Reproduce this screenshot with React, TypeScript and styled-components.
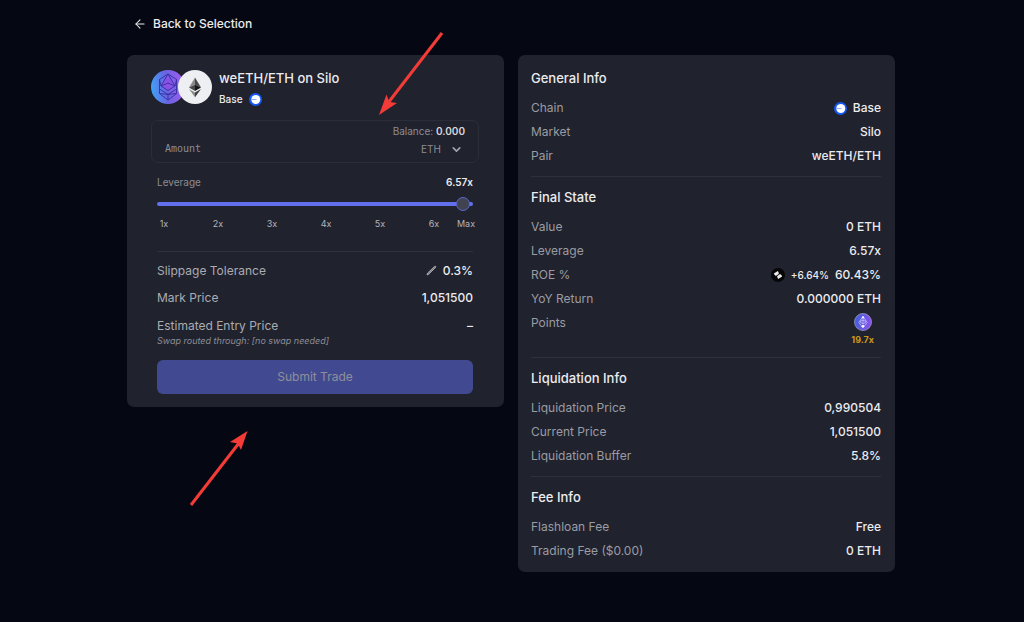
import React, { useState } from "react";
import styled, { createGlobalStyle } from "styled-components";
import { ArrowLeft, ChevronDown } from "lucide-react";

const sans = `Inter, "Liberation Sans", sans-serif`;

const GlobalStyle = createGlobalStyle`
  * { box-sizing: border-box; }
  body {
    margin: 0;
    background: #050812;
    color: #ececee;
    font-family: ${sans};
    font-size: 12px;
    line-height: 16px;
  }
`;

const Page = styled.main`
  min-height: 100vh;
  padding: 12px 18px 24px 16px;
`;

const Content = styled.div`
  max-width: 768px;
  margin: 0 auto;
`;

const BackLink = styled.a`
  display: inline-flex;
  align-items: center;
  gap: 6px;
  height: 24px;
  margin: 0 0 19px 6px;
  color: #ececee;
  font-weight: 500;
  text-decoration: none;
`;

const Columns = styled.div`
  display: grid;
  grid-template-columns: 1fr 1fr;
  align-items: start;
  gap: 14px;
  @media (max-width: 680px) {
    grid-template-columns: 1fr;
  }
`;

const Panel = styled.section<{ $pad: string }>`
  position: relative;
  padding: ${(p) => p.$pad};
  background: #20222e;
  border-radius: 7px;
`;

const TradeHeader = styled.header`
  display: flex;
  gap: 7px;
  margin-bottom: 11px;
`;

const TokenPair = styled.div`
  display: flex;
  padding-top: 2px;
  svg + svg { margin-left: -7px; }
`;

const PairName = styled.h1`
  margin: 0;
  font-size: 13px;
  line-height: 21px;
  font-weight: 500;
`;

const ChainName = styled.div`
  display: flex;
  align-items: center;
  gap: 6px;
  font-size: 10px;
  line-height: 20px;
  font-weight: 500;
`;

const AmountBox = styled.div`
  display: flex;
  justify-content: space-between;
  align-items: flex-end;
  padding: 2px 13px 5px;
  border: 1px solid #2b2d38;
  border-radius: 7px;
`;

const AmountInput = styled.input`
  flex: 1;
  min-width: 0;
  height: 18px;
  padding: 0;
  border: 0;
  outline: 0;
  background: transparent;
  color: #ececee;
  font: 10px "DejaVu Sans Mono", "Liberation Mono", monospace;
  &::placeholder { color: #8c8d94; opacity: 1; }
`;

const AmountSide = styled.div`
  display: flex;
  flex-direction: column;
  align-items: flex-end;
  gap: 2px;
`;

const Balance = styled.div`
  color: #8c8d94;
  font-size: 10px;
  strong { color: #d8d8db; font-weight: 600; }
`;

const CurrencyPicker = styled.div`
  display: flex;
  align-items: center;
  gap: 9px;
  padding-right: 2px;
  color: #a3a4a9;
`;

const CurrencySelect = styled.select`
  appearance: none;
  height: 16px;
  padding: 0;
  border: 0;
  background: transparent;
  color: #8c8d94;
  font: 10px/16px ${sans};
`;

const Body = styled.div`
  padding: 0 6px;
`;

const LeverageHead = styled.div`
  display: flex;
  justify-content: space-between;
  margin-top: 11px;
  color: #8c8d94;
  font-size: 10px;
  output { color: #ececee; font-weight: 600; }
`;

const Slider = styled.input`
  appearance: none;
  display: block;
  width: 100%;
  height: 14px;
  margin: 7px 0 6px;
  background: transparent;
  &::-webkit-slider-runnable-track {
    height: 4px;
    border-radius: 2px;
    background: #6370ee;
  }
  &::-webkit-slider-thumb {
    appearance: none;
    width: 14px;
    height: 14px;
    margin-top: -5px;
    border: 1px solid #5a66d2;
    border-radius: 50%;
    background: #41434f;
  }
`;

const Ticks = styled.div`
  display: grid;
  grid-template-columns: repeat(5, 54fr) 32fr 14px;
  color: #b4b5ba;
  font-size: 9px;
  line-height: 14px;
`;

const Tick = styled.span`
  display: flex;
  justify-content: center;
  width: 14px;
`;

const Rule = styled.hr`
  height: 1px;
  margin: 20px 0 5px;
  border: 0;
  background: #30323d;
`;

const List = styled.dl`
  margin: 0;
`;

const Row = styled.div<{ $height: number }>`
  display: flex;
  justify-content: space-between;
  align-items: center;
  height: ${(p) => p.$height}px;
`;

const Label = styled.dt<{ $bright?: boolean }>`
  color: ${(p) => (p.$bright ? "#abacb1" : "#9b9ca2")};
`;

const Value = styled.dd`
  display: flex;
  align-items: center;
  gap: 6px;
  margin: 0;
  color: #ececee;
  font-weight: 500;
  small { font-size: 10px; }
`;

const EntryRow = styled(Row)`
  align-items: flex-start;
  padding-top: 7px;
`;

const RouteNote = styled.em`
  display: block;
  color: #8c8d94;
  font-size: 9px;
  line-height: 13px;
`;

const EditButton = styled.button`
  display: flex;
  padding: 0;
  border: 0;
  background: transparent;
  color: #b4b5ba;
`;

const SubmitButton = styled.button`
  display: block;
  width: 100%;
  height: 34px;
  margin-top: 13px;
  border: 0;
  border-radius: 6px;
  background: #414a90;
  color: #8f8f9b;
  font: 12px/16px ${sans};
`;

const Section = styled.section`
  & + & { padding-top: 8px; border-top: 1px solid #2d2f3a; margin-top: 8px; }
`;

const SectionTitle = styled.h2`
  margin: 0 0 6px;
  font-size: 13px;
  line-height: 24px;
  font-weight: 500;
`;

const PointsRow = styled(Row)`
  align-items: flex-start;
  line-height: 24px;
`;

const Points = styled.dd`
  display: flex;
  flex-direction: column;
  align-items: center;
  gap: 2px;
  margin: 0;
  padding: 2px 7px 0 0;
  color: #c99a14;
  font-size: 9px;
  line-height: 14px;
  font-weight: 700;
`;

const Arrow = styled.svg<{ $left: number; $top: number }>`
  position: absolute;
  left: ${(p) => p.$left}px;
  top: ${(p) => p.$top}px;
  pointer-events: none;
`;

const WeEthIcon = () => (
  <svg width="34" height="34" viewBox="0 0 34 34" aria-hidden="true">
    <defs>
      <linearGradient id="weeth" x1="0" y1=".5" x2="1" y2=".4">
        <stop offset="0" stopColor="#3fa2f5" />
        <stop offset=".45" stopColor="#6a63e2" />
        <stop offset="1" stopColor="#a45cf0" />
      </linearGradient>
    </defs>
    <circle cx="17" cy="17" r="17" fill="url(#weeth)" />
    <path d="M17 5l7 10.500-7 5-7-5z" fill="#8a52e4" />
    <g fill="none" stroke="#3330a0" strokeWidth=".9" strokeLinejoin="round">
      <path d="M17 4l8.500 5.500v14L17 30l-8.500-6.500v-14z" />
      <path d="M17 4l-7 12 7 4.500 7-4.500zM10 16l7-3 7 3M8.500 9.500L10 16M25.500 9.500L24 16M8.500 19l8.500 5.500 8.500-5.500M8.500 23.500l8.500 1 8.500-1M17 24.500V30" />
    </g>
  </svg>
);

const EthIcon = () => (
  <svg width="34" height="34" viewBox="0 0 34 34" aria-hidden="true">
    <circle cx="17" cy="17" r="17" fill="#eeeff3" />
    <path d="M17 7.500L11 17.500l6-2.700z" fill="#8b8b8b" />
    <path d="M17 7.500l6 10-6-2.700z" fill="#4a4a4a" />
    <path d="M11 17.500l6-2.700v6.300z" fill="#484848" />
    <path d="M23 17.500l-6-2.700v6.300z" fill="#171717" />
    <path d="M11 19l6 3.500v4.700z" fill="#8b8b8b" />
    <path d="M23 19l-6 3.500v4.700z" fill="#3d3d3d" />
  </svg>
);

const BaseIcon = () => (
  <svg width="13" height="13" viewBox="0 0 13 13" aria-hidden="true">
    <circle cx="6.500" cy="6.500" r="6.500" fill="#1458f5" />
    <circle cx="6.800" cy="6.500" r="4.500" fill="#fff" />
    <path d="M2.500 6h5v1h-5z" fill="#8fb0fb" />
  </svg>
);

const SourceIcon = () => (
  <svg width="14" height="14" viewBox="0 0 14 14" aria-hidden="true">
    <circle cx="7" cy="7" r="7" fill="#060608" />
    <path d="M6.900 2.900L3.200 5.200q-.6.500-.1 1.100l1.700 1.600 2.600-1.700q.9-.8.200-1.700z" fill="#ececec" />
    <path d="M7.100 11.100l3.700-2.300q.6-.5.100-1.100L9.200 6.100 6.600 7.800q-.9.800-.2 1.700z" fill="#ececec" />
  </svg>
);

const PointsIcon = () => (
  <svg width="18" height="18" viewBox="0 0 18 18" aria-hidden="true">
    <defs>
      <linearGradient id="points" x1="0" y1=".4" x2="1" y2=".6">
        <stop offset="0" stopColor="#3f62d8" />
        <stop offset="1" stopColor="#8b50ee" />
      </linearGradient>
    </defs>
    <circle cx="9" cy="9" r="8.500" fill="url(#points)" stroke="#9a94c8" strokeWidth=".8" />
    <g fill="none" stroke="#c6bdf8" strokeWidth=".8">
      <path d="M9 3.200L5.500 8.600 9 11l3.500-2.400zM4.700 9.300L9 14.800l4.300-5.500M9 3.200V11M5.500 8.600L9 7.200l3.500 1.400" />
    </g>
    <circle cx="9" cy="4.500" r="1" fill="#fff" />
    <circle cx="9" cy="13.300" r="1.300" fill="#fff" />
  </svg>
);

const PencilIcon = () => (
  <svg width="11" height="11" viewBox="0 0 11 11" fill="#77787f" stroke="currentColor" strokeWidth=".9" strokeLinejoin="round" aria-hidden="true">
    <path d="M1 10l.6-1.900 7-6.700q.5-.4 1 0t0 1l-6.900 6.800z" />
  </svg>
);

type Item = { label: string; value: React.ReactNode };

const InfoSection = ({ title, items, children }: { title: string; items: Item[]; children?: React.ReactNode }) => (
  <Section>
    <SectionTitle>{title}</SectionTitle>
    <List>
      {items.map((item) => (
        <Row key={item.label} $height={24}>
          <Label>{item.label}</Label>
          <Value>{item.value}</Value>
        </Row>
      ))}
      {children}
    </List>
  </Section>
);

export default function App() {
  const [leverage, setLeverage] = useState(6.57);
  return (
    <Page>
      <GlobalStyle />
      <Content>
        <BackLink href="#selection">
          <ArrowLeft size={14} strokeWidth={1.8} />
          Back to Selection
        </BackLink>
        <Columns>
          <Panel $pad="13px 25px 13px 24px">
            <TradeHeader>
              <TokenPair>
                <WeEthIcon />
                <EthIcon />
              </TokenPair>
              <div>
                <PairName>weETH/ETH on Silo</PairName>
                <ChainName>
                  Base <BaseIcon />
                </ChainName>
              </div>
            </TradeHeader>
            <AmountBox>
              <AmountInput placeholder="Amount" aria-label="Amount" />
              <AmountSide>
                <Balance>
                  Balance: <strong>0.000</strong>
                </Balance>
                <CurrencyPicker>
                  <CurrencySelect aria-label="Currency">
                    <option>ETH</option>
                  </CurrencySelect>
                  <ChevronDown size={13} strokeWidth={3} />
                </CurrencyPicker>
              </AmountSide>
            </AmountBox>
            <Body>
              <LeverageHead>
                <label htmlFor="leverage">Leverage</label>
                <output htmlFor="leverage">{leverage}x</output>
              </LeverageHead>
              <Slider
                id="leverage"
                type="range"
                min={1}
                max={6.63}
                step={0.01}
                value={leverage}
                onChange={(e) => setLeverage(Number(e.target.value))}
              />
              <Ticks>
                {["1x", "2x", "3x", "4x", "5x", "6x", "Max"].map((t) => (
                  <Tick key={t}>{t}</Tick>
                ))}
              </Ticks>
              <Rule />
              <List>
                <Row $height={27}>
                  <Label $bright>Slippage Tolerance</Label>
                  <Value>
                    <EditButton type="button" aria-label="Edit slippage tolerance">
                      <PencilIcon />
                    </EditButton>
                    0.3%
                  </Value>
                </Row>
                <Row $height={27}>
                  <Label $bright>Mark Price</Label>
                  <Value>1,051500</Value>
                </Row>
                <EntryRow $height={36}>
                  <Label $bright>
                    Estimated Entry Price
                    <RouteNote>Swap routed through: [no swap needed]</RouteNote>
                  </Label>
                  <Value>–</Value>
                </EntryRow>
              </List>
              <SubmitButton type="submit" disabled>
                Submit Trade
              </SubmitButton>
            </Body>
            <Arrow $left={246} $top={-27} width="76" height="92" viewBox="0 0 76 92" aria-hidden="true">
              <path d="M69 5L15 75" stroke="#f43b38" strokeWidth="3" />
              <path d="M6 87l7.500-20.500 2.800 7.500 7.700 1z" fill="#f43b38" />
            </Arrow>
            <Arrow $left={58} $top={370} width="70" height="86" viewBox="0 0 70 86" aria-hidden="true">
              <path d="M6 80L54 18" stroke="#f43b38" strokeWidth="3" />
              <path d="M62.500 6L45 17l7.700 1.600 3.300 6.400z" fill="#f43b38" />
            </Arrow>
          </Panel>
          <Panel $pad="11px 14px 9px 13px">
            <InfoSection
              title="General Info"
              items={[
                { label: "Chain", value: <><BaseIcon />Base</> },
                { label: "Market", value: "Silo" },
                { label: "Pair", value: "weETH/ETH" },
              ]}
            />
            <InfoSection
              title="Final State"
              items={[
                { label: "Value", value: "0 ETH" },
                { label: "Leverage", value: "6.57x" },
                { label: "ROE %", value: <><SourceIcon /><small>+6.64%</small>60.43%</> },
                { label: "YoY Return", value: "0.000000 ETH" },
              ]}
            >
              <PointsRow $height={38}>
                <Label>Points</Label>
                <Points>
                  <PointsIcon />
                  19.7x
                </Points>
              </PointsRow>
            </InfoSection>
            <InfoSection
              title="Liquidation Info"
              items={[
                { label: "Liquidation Price", value: "0,990504" },
                { label: "Current Price", value: "1,051500" },
                { label: "Liquidation Buffer", value: "5.8%" },
              ]}
            />
            <InfoSection
              title="Fee Info"
              items={[
                { label: "Flashloan Fee", value: "Free" },
                { label: "Trading Fee ($0.00)", value: "0 ETH" },
              ]}
            />
          </Panel>
        </Columns>
      </Content>
    </Page>
  );
}
